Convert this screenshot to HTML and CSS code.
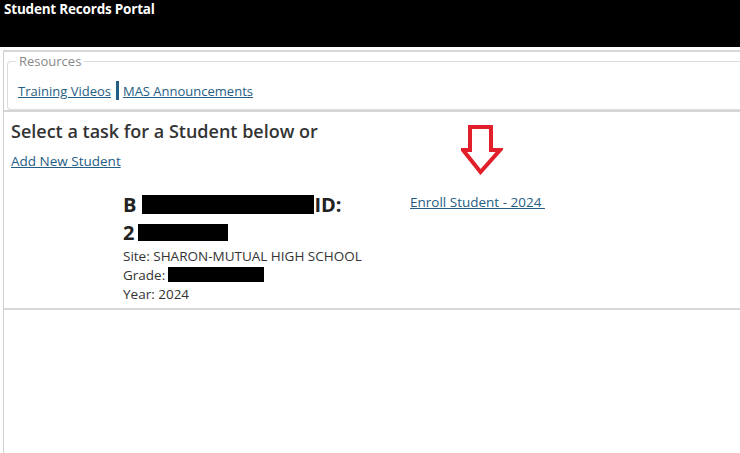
FILE: index.html
```html
<!DOCTYPE html>
<html lang="en">
  <head>
    <meta charset="UTF-8" />
    <meta name="viewport" content="width=device-width, initial-scale=1.0" />
    <title>Student Records Portal</title>
    <link rel="stylesheet" href="styles.css">
  </head>
  <body>
    <header class="top-bar">
      <div class="app-title">Student Records Portal</div>
    </header>
    <div class="page">
      <fieldset class="resources">
        <legend>Resources</legend>
        <a href="#">Training Videos</a><span class="sep"></span><a href="#">MAS Announcements</a>
      </fieldset>
      <div class="task-area">
        <h2>Select a task for a Student below or</h2>
        <a href="#" class="add-link">Add New Student</a>
        <div class="student-row">
          <div class="student-info">
            <div class="student-name">B<span class="redact r-name"></span>ID:</div>
            <div class="student-name">2<span class="redact r-id"></span></div>
            <div class="detail">Site: SHARON-MUTUAL HIGH SCHOOL</div>
            <div class="detail">Grade: <span class="redact r-grade"></span></div>
            <div class="detail">Year: 2024</div>
          </div>
          <div class="student-tasks">
            <svg class="arrow" width="42" height="50" viewBox="0 0 42 50">
              <path d="M9 2 H30 V25 H39 L19.5 47 L2 25 H9 Z" fill="none" stroke="#e01f2b" stroke-width="4" stroke-linejoin="miter"/>
            </svg>
            <a href="#" class="enroll-link">Enroll Student - 2024&nbsp;</a>
          </div>
        </div>
      </div>
    </div>
  </body>
</html>
```

FILE: styles.css
```css
body {
  font-family: "Open Sans", "Noto Sans", sans-serif;
  margin: 0;
  color: #333;
  background: #fff;
}
a {
  color: #245d85;
}
.top-bar {
  background-color: #000;
  height: 47px;
  padding: 0 4px;
  box-sizing: border-box;
}
.app-title {
  color: #fff;
  font-weight: bold;
  font-size: 13.5px;
  line-height: 18px;
  letter-spacing: -0.2px;
}
.page {
  margin: 3px 0 0 3px;
  border-left: 1px solid #cfcfcf;
  border-top: 2px solid #d8d8d8;
  min-height: 401px;
}
.resources {
  margin: 0 0 0 3px;
  padding: 10px 10px 9px 10px;
  border: 1px solid #dcdcdc;
  border-right: none;
  border-radius: 4px 0 0 4px;
  font-size: 13px;
}
.resources legend {
  color: #888;
  padding: 0 3px;
  margin-left: -2px;
  line-height: 18px;
}
.resources a {
  vertical-align: middle;
}
.sep {
  display: inline-block;
  width: 3px;
  height: 19px;
  background: #245d85;
  margin: 0 4px 0 5px;
  vertical-align: middle;
}
.task-area {
  border-top: 2px solid #d5d5d5;
  border-bottom: 2px solid #d8d8d8;
  padding: 7px 7px 4px 7px;
}
.task-area h2 {
  font-size: 18px;
  font-weight: 600;
  margin: 0 0 6px 0;
  line-height: 24px;
}
.add-link {
  font-size: 13.5px;
}
.student-row {
  display: flex;
  margin-top: 20px;
  padding-left: 112px;
}
.student-info {
  width: 287px;
}
.student-name {
  font-size: 20px;
  font-weight: 700;
  line-height: 28px;
  color: #222;
}
.redact {
  display: inline-block;
  background: #000;
  vertical-align: middle;
  margin-top: -4px;
}
.r-name {
  width: 172px;
  height: 19px;
  margin-left: 6px;
}
.r-id {
  width: 90px;
  height: 17px;
  margin-left: 4px;
}
.r-grade {
  width: 96px;
  height: 15px;
  margin-left: -1px;
}
.detail {
  font-size: 13.5px;
  line-height: 19px;
}
.student-tasks {
  display: flex;
  flex-direction: column;
  align-items: flex-start;
}
.arrow {
  margin: -66px 0 0 51px;
}
.enroll-link {
  font-size: 13.5px;
  margin-top: 18px;
}
```
